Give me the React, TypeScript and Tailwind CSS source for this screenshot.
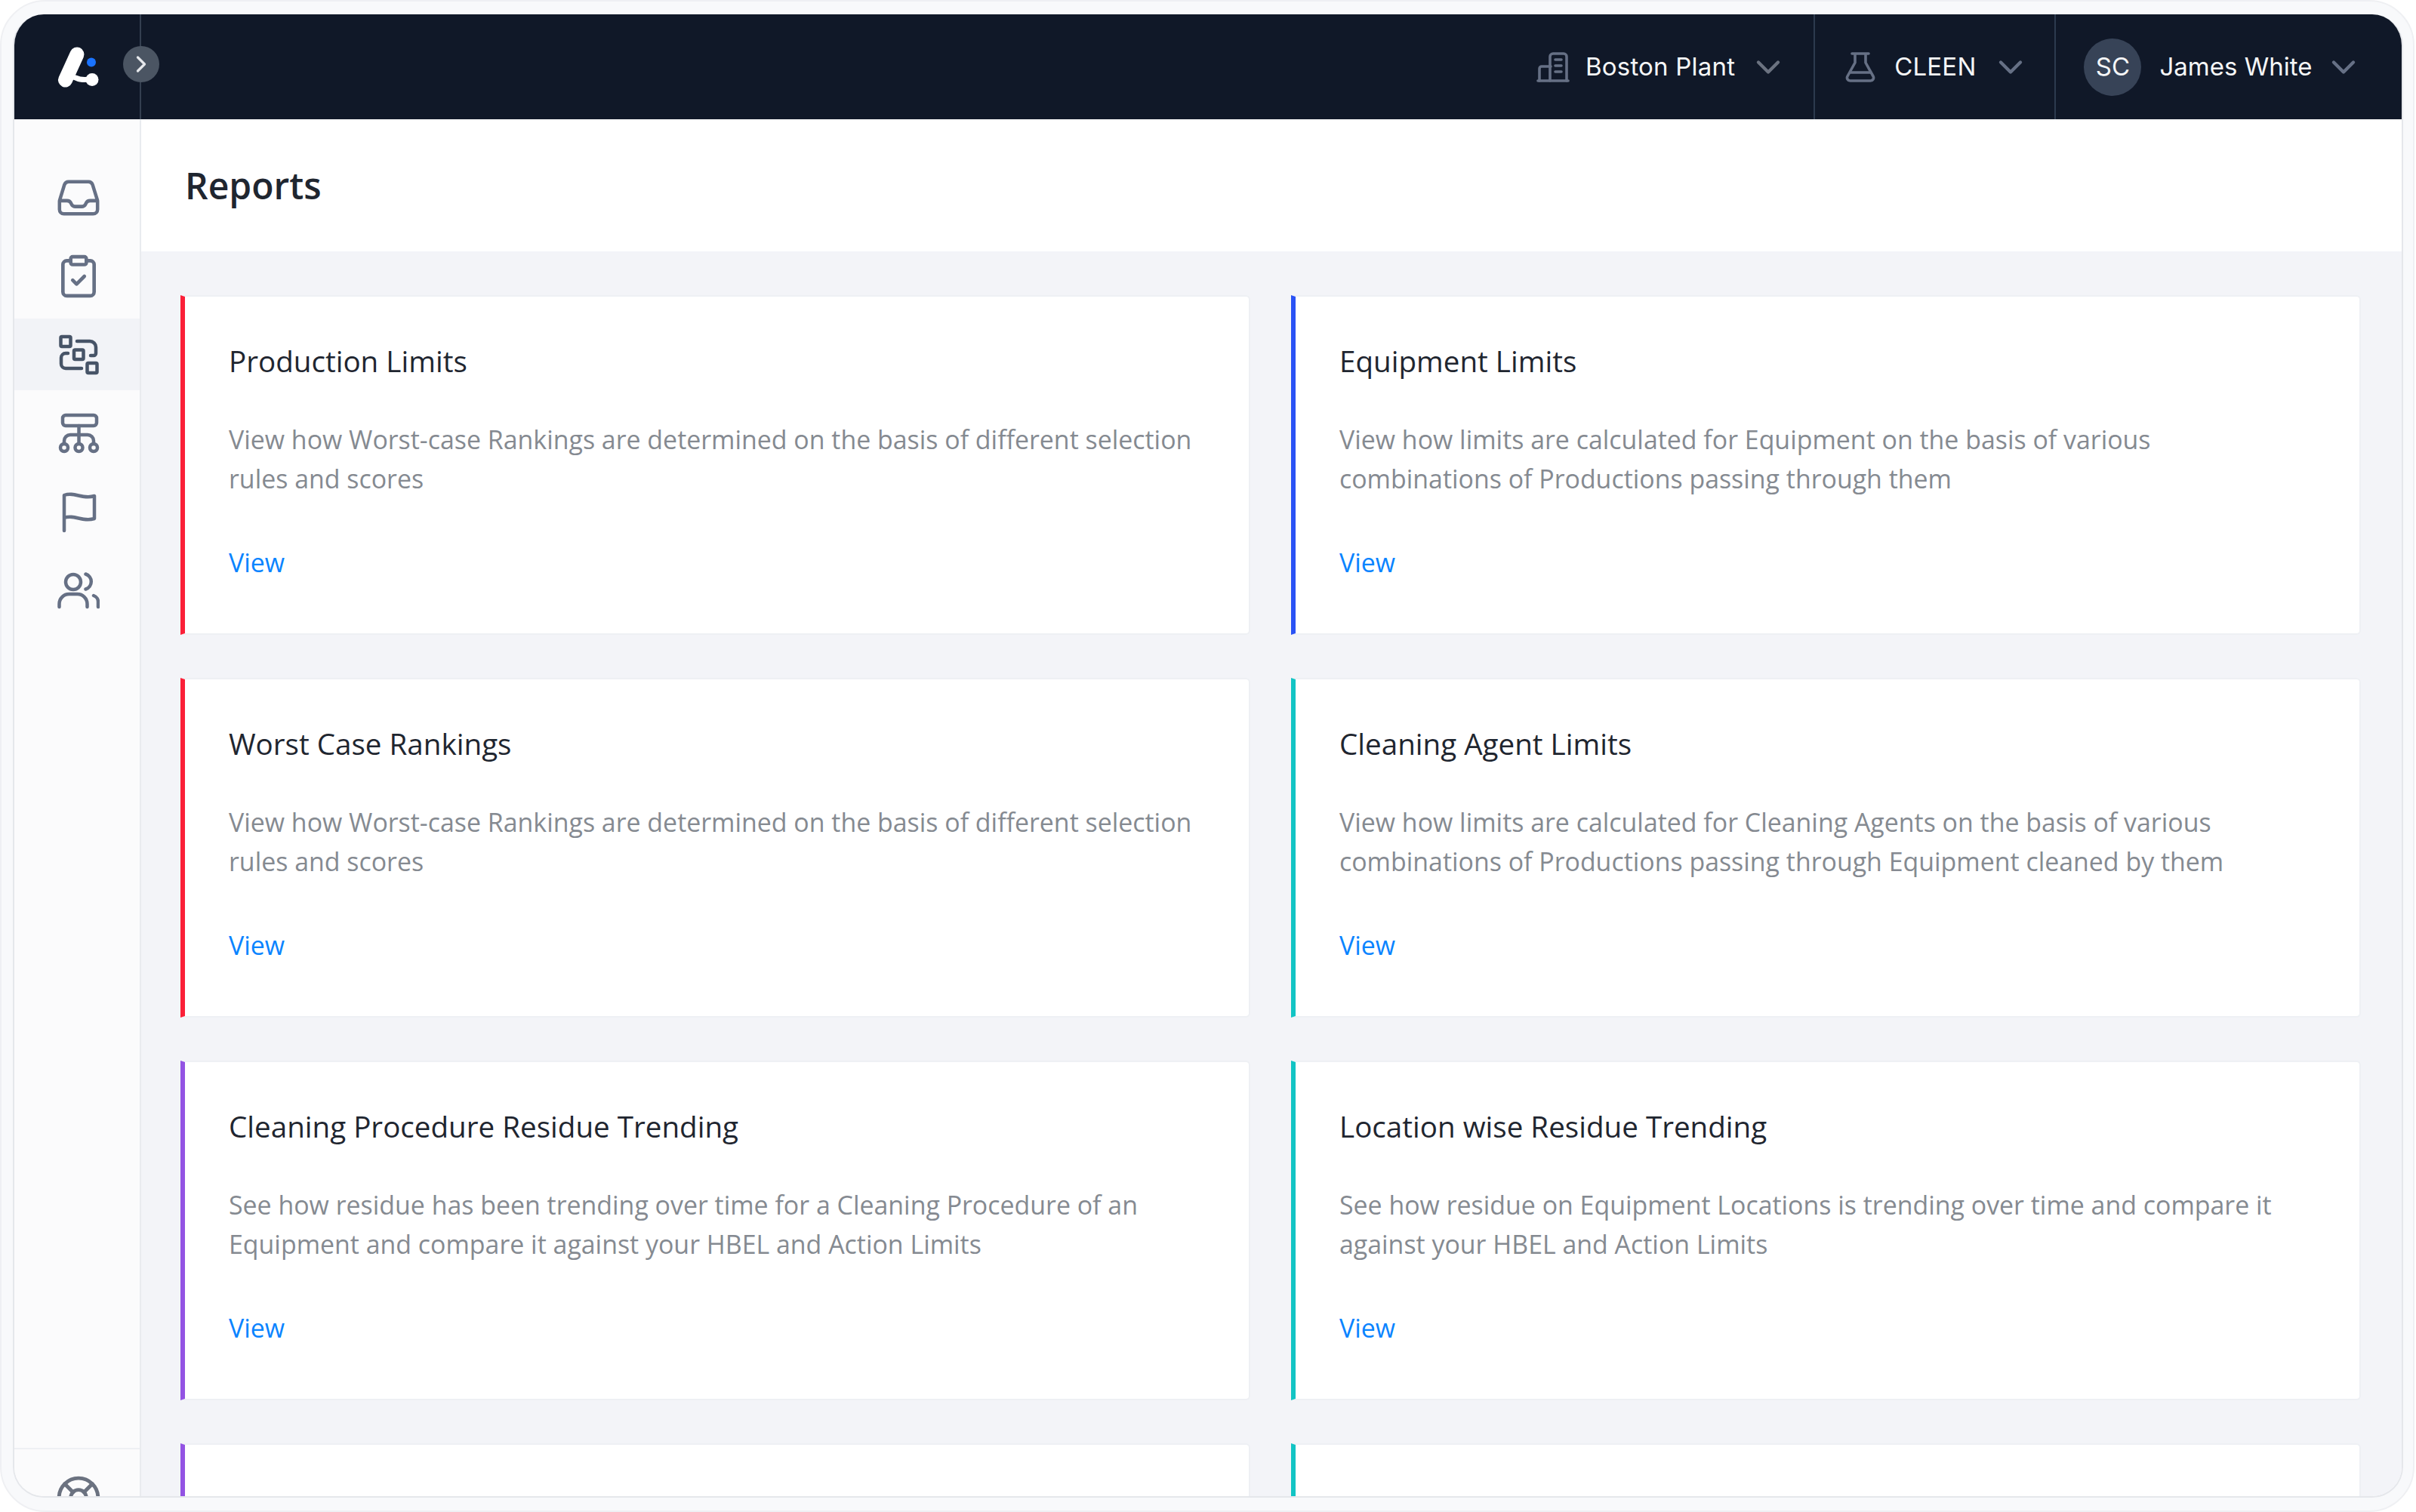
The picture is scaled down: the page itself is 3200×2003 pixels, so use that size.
import { ChevronDown, ChevronRight, ClipboardCheck, LifeBuoy } from "lucide-react";
import type { ReactNode } from "react";

const reports = [
  { title: "Production Limits", text: "View how Worst-case Rankings are determined on the basis of different selection rules and scores", bar: "border-l-[#fb2038]" },
  { title: "Equipment Limits", text: "View how limits are calculated for Equipment on the basis of various combinations of Productions passing through them", bar: "border-l-[#2a52f5]" },
  { title: "Worst Case Rankings", text: "View how Worst-case Rankings are determined on the basis of different selection rules and scores", bar: "border-l-[#fb2038]" },
  { title: "Cleaning Agent Limits", text: "View how limits are calculated for Cleaning Agents on the basis of various combinations of Productions passing through Equipment cleaned by them", bar: "border-l-[#12c4c4]" },
  { title: "Cleaning Procedure Residue Trending", text: "See how residue has been trending over time for a Cleaning Procedure of an Equipment and compare it against your HBEL and Action Limits", bar: "border-l-[#9353e3]" },
  { title: "Location wise Residue Trending", text: "See how residue on Equipment Locations is trending over time and compare it against your HBEL and Action Limits", bar: "border-l-[#12c4c4]" },
  { title: "", text: "", bar: "border-l-[#9353e3]" },
  { title: "", text: "", bar: "border-l-[#12c4c4]" },
];

function Glyph({ box, children, stroke = 4.5 }: { box: string; children: ReactNode; stroke?: number }) {
  return (
    <svg viewBox={box} width="56" height="56" fill="none" stroke="currentColor" strokeWidth={stroke} strokeLinecap="round" strokeLinejoin="round">
      {children}
    </svg>
  );
}

function Logo() {
  return (
    <svg viewBox="70 55 70 65" width="70" height="65" fill="none" strokeLinecap="round">
      <path d="M102 71 86.500 105" stroke="#fff" strokeWidth="19" />
      <path d="M88 105c8-8 12-2 18-1 6 1 10 1 16-1" stroke="#fff" strokeWidth="7" />
      <circle cx="122" cy="104.500" r="8.500" fill="#fff" />
      <circle cx="121" cy="81.500" r="6" fill="#1a73ff" />
    </svg>
  );
}

function NavItem({ active, children }: { active?: boolean; children: ReactNode }) {
  return (
    <div className={active ? "flex h-[95px] items-center justify-center bg-[#f2f3f7] pl-[4px] text-[#475467]" : "flex h-[95px] items-center justify-center pl-[4px] text-[#667085]"}>
      {children}
    </div>
  );
}

function Sidebar() {
  return (
    <aside className="flex w-[168px] shrink-0 flex-col justify-between overflow-hidden border-r-2 border-[#e9ebef] bg-[#fbfbfc]">
      <div className="flex flex-col gap-[9px] pt-[56px]">
        <NavItem>
          <svg viewBox="0 0 24 24" width="62" height="62" fill="none" stroke="currentColor" strokeWidth="1.750" strokeLinecap="round" strokeLinejoin="round">
            <path d="M2.250 13.500h3.860a2.250 2.250 0 0 1 2.012 1.244l.256.512a2.250 2.250 0 0 0 2.013 1.244h3.218a2.250 2.250 0 0 0 2.013-1.244l.256-.512a2.250 2.250 0 0 1 2.013-1.244h3.859m-19.500.338V18a2.250 2.250 0 0 0 2.250 2.250h15A2.250 2.250 0 0 0 21.750 18v-4.162c0-.224-.034-.447-.1-.661L19.240 5.338a2.250 2.250 0 0 0-2.150-1.588H6.911a2.250 2.250 0 0 0-2.150 1.588L2.350 13.177a2.250 2.250 0 0 0-.1.661Z" />
          </svg>
        </NavItem>
        <NavItem>
          <ClipboardCheck size={62} strokeWidth={1.8} />
        </NavItem>
        <NavItem active>
          <Glyph box="76 443 56 56">
            <rect x="80.500" y="447" width="13" height="13" rx="1.500" />
            <rect x="98" y="464.500" width="12.500" height="12.500" rx="1.500" />
            <rect x="115.500" y="482" width="13" height="13" rx="1.500" />
            <path d="M102 453h17a8 8 0 0 1 8 8v8a3 3 0 0 1-3 3h-4" />
            <path d="M90 469h-3a6 6 0 0 0-6 6v8a6 6 0 0 0 6 6h21" />
          </Glyph>
        </NavItem>
        <NavItem>
          <Glyph box="76 547 56 56">
            <rect x="83" y="551" width="45" height="14" rx="4" />
            <path d="M104.500 565v24" />
            <path d="M85 589v-4a8 8 0 0 1 8-8h23a8 8 0 0 1 8 8v4" />
            <circle cx="85" cy="594" r="5" />
            <circle cx="104.500" cy="594" r="5" />
            <circle cx="124" cy="594" r="5" />
          </Glyph>
        </NavItem>
        <NavItem>
          <Glyph box="76 651 56 56">
            <path d="M85 704V657c14-5 24 6 40 1v30c-16 5-26-6-40-1" />
          </Glyph>
        </NavItem>
        <NavItem>
          <Glyph box="76 755 56 56">
            <circle cx="97" cy="772" r="10" />
            <path d="M113.500 761.500a10.500 10.500 0 0 1 0 20" />
            <path d="M78.500 805v-4a13 13 0 0 1 13-13h11a13 13 0 0 1 13 13v4" />
            <path d="M124 790a9 9 0 0 1 6 9v6" />
          </Glyph>
        </NavItem>
      </div>
      <div className="h-[64px] shrink-0 border-t-2 border-[#eef0f4] pt-[33px] pl-[4px] text-[#6b7280]">
        <div className="flex justify-center">
          <LifeBuoy size={62} strokeWidth={1.9} className="shrink-0" />
        </div>
      </div>
    </aside>
  );
}

function Topbar() {
  return (
    <header className="relative flex h-[139px] shrink-0 items-center bg-[#101828] font-['Inter',sans-serif]">
      <div className="flex h-full w-[168px] shrink-0 items-center justify-center border-r-2 border-[#343f50] pl-[5px]">
        <Logo />
      </div>
      <button className="absolute top-[42px] left-[144px] flex h-[48px] w-[48px] items-center justify-center rounded-full bg-[#4b5563] text-[#e5e7eb]">
        <ChevronRight size={36} strokeWidth={2.2} />
      </button>
      <div className="flex h-full items-center pr-[34px] pl-[1848px]">
        <svg viewBox="0 0 44 40" width="44" height="40" fill="none" stroke="#667085" strokeWidth="3.600" strokeLinecap="round" strokeLinejoin="round" className="mr-[21px]">
          <path d="M2 38h40" />
          <path d="M4 38V22a3 3 0 0 1 3-3h12" />
          <path d="M18 38V6a4 4 0 0 1 4-4h14a4 4 0 0 1 4 4v32" />
          <path d="M25 10h8M25 18h8M25 26h8" />
        </svg>
        <span className="text-[33px] leading-none tracking-[0.2px] text-[#f5f6f7]">Boston Plant</span>
        <ChevronDown size={52} strokeWidth={2} className="ml-[18px] text-[#6b7280]" />
      </div>
      <div className="flex h-full items-center border-l-2 border-[#2c3a4e] pr-[32px] pl-[40px]">
        <svg viewBox="0 0 40 40" width="40" height="40" fill="none" stroke="#667085" strokeWidth="3.600" strokeLinecap="round" strokeLinejoin="round" className="mr-[25px]">
          <path d="M9 2h22M13 2v12L3 32a4 4 0 0 0 3.500 6h27a4 4 0 0 0 3.500-6L27 14V2" />
          <path d="M7 27h26" />
        </svg>
        <span className="text-[33px] leading-none tracking-[0.2px] text-[#f5f6f7]">CLEEN</span>
        <ChevronDown size={52} strokeWidth={2} className="ml-[20px] text-[#667085]" />
      </div>
      <div className="flex h-full flex-1 items-center border-l-2 border-[#2c3a4e] pl-[37px]">
        <div className="mr-[24px] flex h-[76px] w-[76px] items-center justify-center rounded-full bg-[#374357] text-[33px] leading-none text-[#f5f6f7]">SC</div>
        <span className="text-[33px] leading-none text-[#f5f6f7]">James White</span>
        <ChevronDown size={52} strokeWidth={2} className="ml-[16px] text-[#667085]" />
      </div>
    </header>
  );
}

function ReportCard({ title, text, bar }: { title: string; text: string; bar: string }) {
  return (
    <article className={"flex h-[450px] flex-col rounded-r-[6px] border-y-2 border-r-2 border-l-[6px] border-y-[#eef0f4] border-r-[#eef0f4] bg-white pt-[58px] pr-[60px] pl-[58px] " + bar}>
      <h2 className="h-[54px] text-[38.6px] leading-[54px] font-normal text-[#1f2630]">{title}</h2>
      <p className="mt-[51px] h-[104px] text-[33.9px] leading-[52px] text-[#858a91]">{text}</p>
      {title && <a className="mt-[59px] text-[33.9px] leading-[52px] text-[#0a84ff]">View</a>}
    </article>
  );
}

export default function App() {
  return (
    <div className="h-[2003px] w-[3200px] overflow-hidden bg-white font-['Open_Sans',sans-serif]">
      <div className="h-full w-[3198px] rounded-[60px] border-2 border-[#eff0f3] bg-[#f8f9fb] pt-[17px] pr-[13px] pb-[17px] pl-[15px]">
        <div className="flex h-full flex-col overflow-hidden rounded-[41px] border-x-2 border-b-2 border-[#e5e7eb] bg-white">
          <Topbar />
          <div className="flex min-h-0 flex-1">
            <Sidebar />
            <main className="flex min-w-0 flex-1 flex-col bg-[#f3f4f8]">
              <div className="flex h-[175px] shrink-0 items-center bg-white pl-[58px]">
                <h1 className="text-[48px] leading-none font-semibold text-[#1f2630]">Reports</h1>
              </div>
              <div className="grid grid-cols-2 gap-x-[54px] gap-y-[57px] pt-[58px] pr-[54px] pl-[52px]">
                {reports.map((r, i) => (
                  <ReportCard key={i} title={r.title} text={r.text} bar={r.bar} />
                ))}
              </div>
            </main>
          </div>
        </div>
      </div>
    </div>
  );
}
